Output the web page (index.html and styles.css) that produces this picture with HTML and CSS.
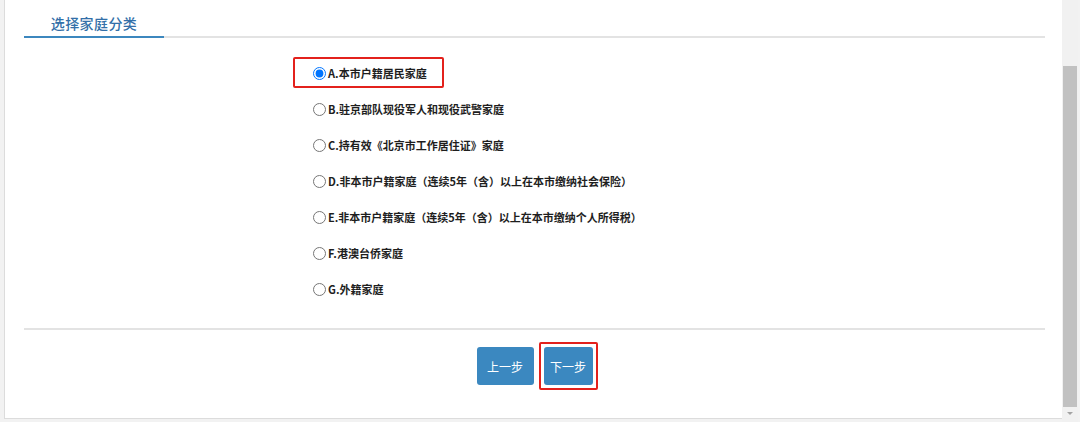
FILE: index.html
```html
<!DOCTYPE html>
<html lang="zh-CN">
<head>
    <meta charset="UTF-8">
    <meta name="viewport" content="width=device-width, initial-scale=1.0">
    <title>选择家庭分类</title>
    <link rel="stylesheet" href="styles.css">
</head>
<body>
    <div class="frame">
        <div class="panel">
            <div class="tabs">
                <div class="tab">选择家庭分类</div>
            </div>

            <div class="options">
                <label class="option marked"><input type="radio" name="family" checked> A.本市户籍居民家庭</label>
                <label class="option"><input type="radio" name="family"> B.驻京部队现役军人和现役武警家庭</label>
                <label class="option"><input type="radio" name="family"> C.持有效《北京市工作居住证》家庭</label>
                <label class="option"><input type="radio" name="family"> D.非本市户籍家庭（连续5年（含）以上在本市缴纳社会保险）</label>
                <label class="option"><input type="radio" name="family"> E.非本市户籍家庭（连续5年（含）以上在本市缴纳个人所得税）</label>
                <label class="option"><input type="radio" name="family"> F.港澳台侨家庭</label>
                <label class="option"><input type="radio" name="family"> G.外籍家庭</label>
            </div>

            <div class="actions">
                <button class="btn btn-prev">上一步</button>
                <button class="btn btn-next marked">下一步</button>
            </div>
        </div>

        <div class="scrollbar">
            <div class="scroll-track"></div>
            <div class="scroll-thumb"></div>
            <div class="scroll-arrow"></div>
        </div>
    </div>
</body>
</html>
```

FILE: styles.css
```css
body {
    margin: 0;
    font-family: "Noto Sans CJK SC", "Liberation Sans", sans-serif;
    background-color: #fff;
}
.frame {
    display: flex;
    height: 422px;
    padding-left: 4px;
    background-color: #f2f2f2;
    box-sizing: border-box;
}
.panel {
    flex: 1;
    height: 419px;
    padding: 0 17px 0 19px;
    background-color: #fff;
    border-left: 1px solid #dcdcdc;
    border-bottom: 1px solid #dcdcdc;
    box-sizing: border-box;
}
.tabs {
    display: flex;
    border-bottom: 2px solid #e3e3e3;
}
.tab {
    width: 140px;
    padding: 13px 0 3px;
    margin-bottom: -2px;
    line-height: 20px;
    text-align: center;
    font-size: 14px;
    font-weight: 500;
    letter-spacing: 0.4px;
    color: #336fa8;
    border-bottom: 2px solid #3c87be;
}
.options {
    display: flex;
    flex-direction: column;
    padding: 17px 0 21px 289px;
    border-bottom: 2px solid #e3e3e3;
}
.option {
    position: relative;
    display: flex;
    align-items: center;
    align-self: flex-start;
    height: 36px;
    font-size: 11px;
    font-weight: bold;
    color: #1e1e1e;
}
.option input {
    width: 13px;
    height: 13px;
    margin: 0 2px 0 0;
}
.option.marked::after {
    content: "";
    position: absolute;
    left: -20px;
    right: -17px;
    top: 2px;
    bottom: 3px;
    border: 2px solid #e3211c;
    border-radius: 2px;
}
.actions {
    display: flex;
    justify-content: center;
    gap: 10px;
    padding: 17px 0 0 0;
}
.btn {
    position: relative;
    height: 38px;
    border: none;
    border-radius: 3px;
    background-color: #3b88c0;
    color: #fff;
    font-family: inherit;
    font-size: 12px;
    cursor: pointer;
}
.btn-prev {
    width: 57px;
}
.btn-next {
    width: 49px;
}
.btn.marked::after {
    content: "";
    position: absolute;
    inset: -5px;
    border: 2px solid #e3211c;
    border-radius: 2px;
}
.scrollbar {
    display: flex;
    flex-direction: column;
    width: 16px;
    margin-right: 2px;
    background-color: #f1f1f1;
}
.scroll-track {
    height: 66px;
}
.scroll-thumb {
    flex: 1;
    margin: 0 1px;
    background-color: #c1c1c1;
}
.scroll-arrow {
    height: 15px;
    position: relative;
}
.scroll-arrow::after {
    content: "";
    position: absolute;
    left: 5px;
    top: 5px;
    border-left: 3px solid transparent;
    border-right: 3px solid transparent;
    border-top: 3px solid #a3a3a3;
}
```
